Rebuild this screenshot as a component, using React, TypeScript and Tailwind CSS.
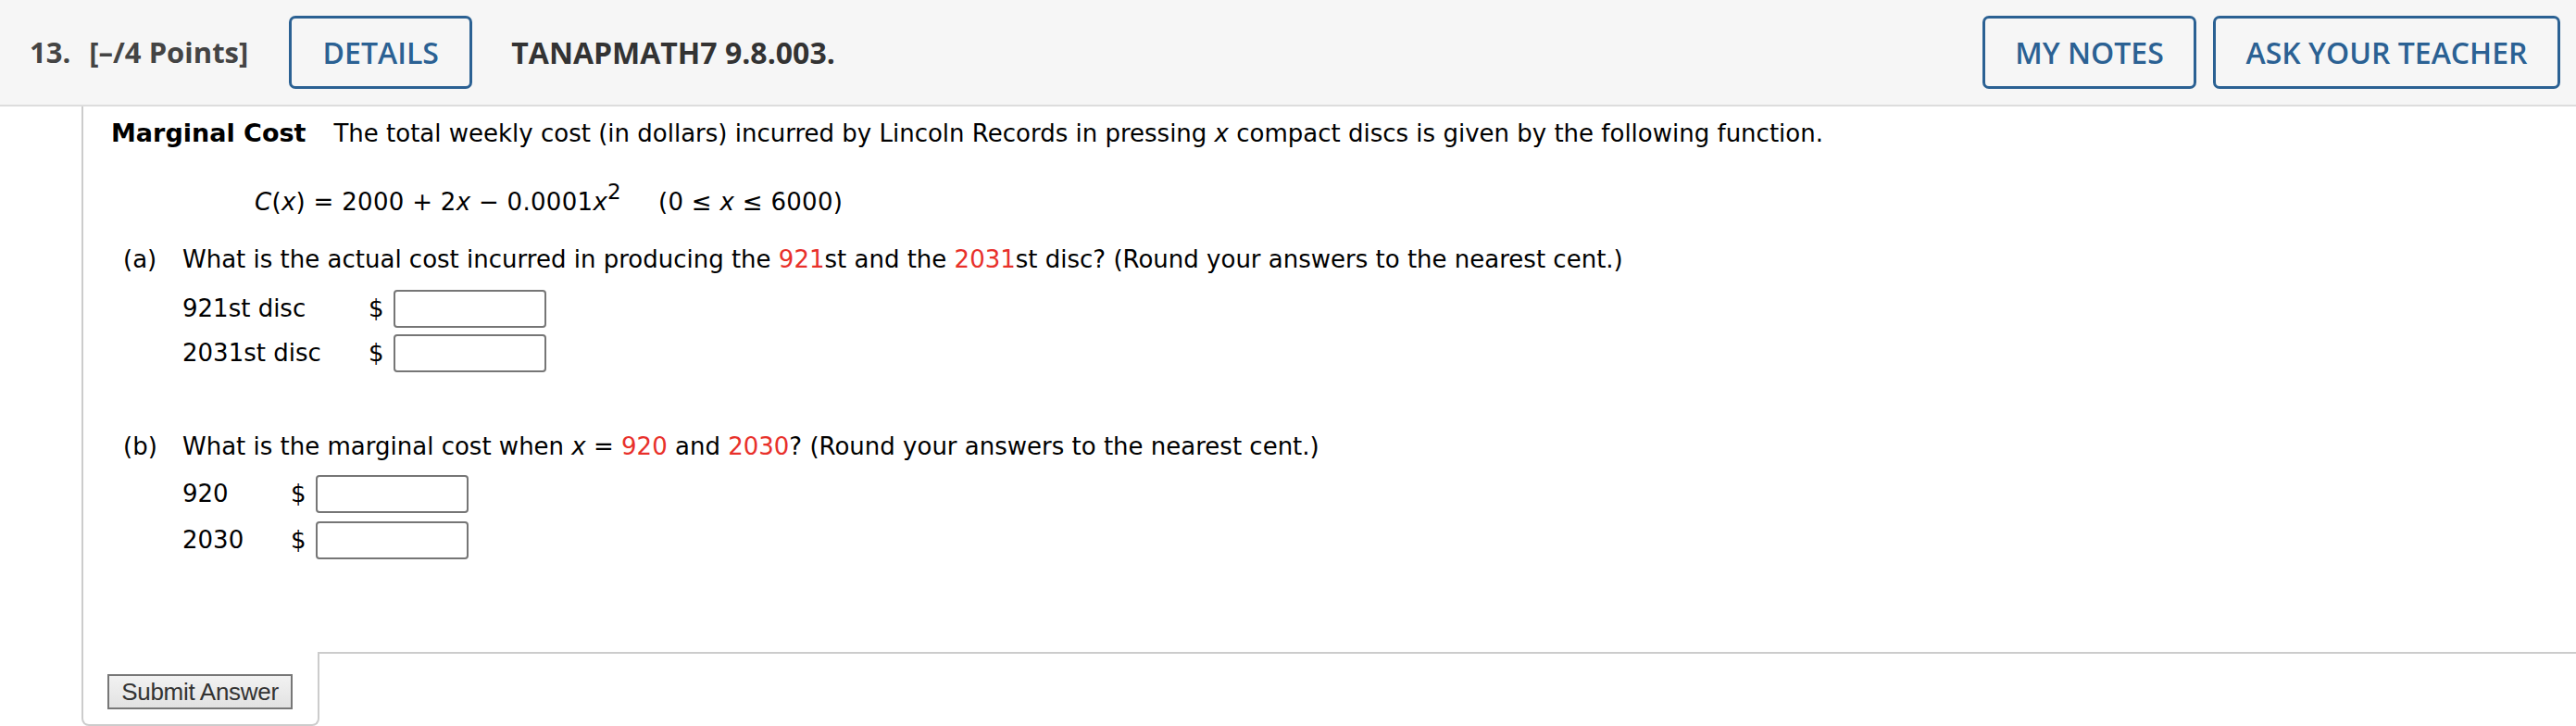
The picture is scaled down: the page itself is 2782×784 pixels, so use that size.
import React from 'react'

const body = "font-['DejaVu_Sans',Verdana,sans-serif]"
const head = "font-['Open_Sans',sans-serif]"

const Red = ({ children }: { children: React.ReactNode }) => (
  <span className="text-[#e8302a]">{children}</span>
)

const HeadButton = ({ label, w }: { label: string; w: string }) => (
  <div
    className={`${w} h-[79px] flex items-center justify-center border-[3px] border-[#2b6193] rounded-[7px] text-[#2b6193] text-[32px] font-semibold ${head}`}
  >
    {label}
  </div>
)

const AnswerBox = () => (
  <div className="w-[165px] h-[41px] border-2 border-[#767676] rounded-[4px] bg-white" />
)

const AnswerRow = ({ label, labelW }: { label: React.ReactNode; labelW: string }) => (
  <div className="flex items-center h-[41px] pl-[77px]">
    <span className={labelW}>{label}</span>
    <span className="w-[27px]">$</span>
    <AnswerBox />
  </div>
)

export default function App() {
  return (
    <div className="w-[2782px] h-[784px] bg-white overflow-hidden flex flex-col">
      {/* header */}
      <div className={`h-[115px] shrink-0 bg-[#f6f6f6] border-b-2 border-[#dddddd] flex items-center pl-[32px] pr-[17px] ${head}`}>
        <span className="text-[31px] font-bold text-[#444]">13.</span>
        <span className="ml-[20px] text-[31px] font-bold text-[#444]">[–/4 Points]</span>
        <div className="ml-[44px]">
          <HeadButton label="DETAILS" w="w-[198px]" />
        </div>
        <span className="ml-[42px] text-[32px] font-bold text-[#333]">TANAPMATH7 9.8.003.</span>
        <div className="flex-1" />
        <HeadButton label="MY NOTES" w="w-[231px]" />
        <div className="ml-[18px]">
          <HeadButton label="ASK YOUR TEACHER" w="w-[375px]" />
        </div>
      </div>

      {/* question */}
      <div className={`flex-1 flex flex-col ml-[88px] text-black text-[26px] ${body}`}>
        <div className="flex-1 border-l-2 border-[#cccccc] pl-[30px] pt-[11px]">
          <div className="leading-[36px] flex items-baseline">
            <span className="font-bold text-[27px]">Marginal Cost</span>
            <span className="ml-[30px]">
              The total weekly cost (in dollars) incurred by Lincoln Records in pressing <i>x</i> compact discs is given by the following function.
            </span>
          </div>
          <div className="leading-[36px] mt-[38px] pl-[155px] whitespace-pre tracking-[0.3px]">
            <i>C</i>(<i>x</i>) = 2000 + 2<i>x</i> − 0.0001<i>x</i>
            <sup className="text-[23px] -top-[12px]">2</sup>
            <span className="ml-[40px]">
              (0 ≤ <i>x</i> ≤ 6000)
            </span>
          </div>

          <div className="leading-[36px] mt-[26px] flex pl-[13px]">
            <span className="w-[64px]">(a)</span>
            <span>
              What is the actual cost incurred in producing the <Red>921</Red>st and the <Red>2031</Red>st disc? (Round your answers to the nearest cent.)
            </span>
          </div>
          <div className="mt-[15px] flex flex-col gap-[7px]">
            <AnswerRow label="921st disc" labelW="w-[201px]" />
            <AnswerRow label="2031st disc" labelW="w-[201px]" />
          </div>

          <div className="leading-[36px] mt-[62px] flex pl-[13px]">
            <span className="w-[64px]">(b)</span>
            <span>
              What is the marginal cost when <i>x</i> = <Red>920</Red> and <Red>2030</Red>? (Round your answers to the nearest cent.)
            </span>
          </div>
          <div className="mt-[13px] flex flex-col gap-[9px]">
            <AnswerRow label="920" labelW="w-[117px]" />
            <AnswerRow label="2030" labelW="w-[117px]" />
          </div>
        </div>

        {/* submit row */}
        <div className="h-[80px] shrink-0 flex">
          <div className="w-[257px] border-l-2 border-b-2 border-r-2 border-[#cccccc] rounded-b-[8px] pl-[26px] pt-[24px]">
            <button className="w-[200px] h-[38px] border-2 border-[#777] bg-gradient-to-b from-[#f2f2f2] to-[#e2e2e2] text-[#333] text-[26px] leading-none font-['Liberation_Sans',Arial,sans-serif] tracking-[-0.3px]">
              Submit Answer
            </button>
          </div>
          <div className="flex-1 border-t-2 border-[#cccccc]" />
        </div>
      </div>
    </div>
  )
}
